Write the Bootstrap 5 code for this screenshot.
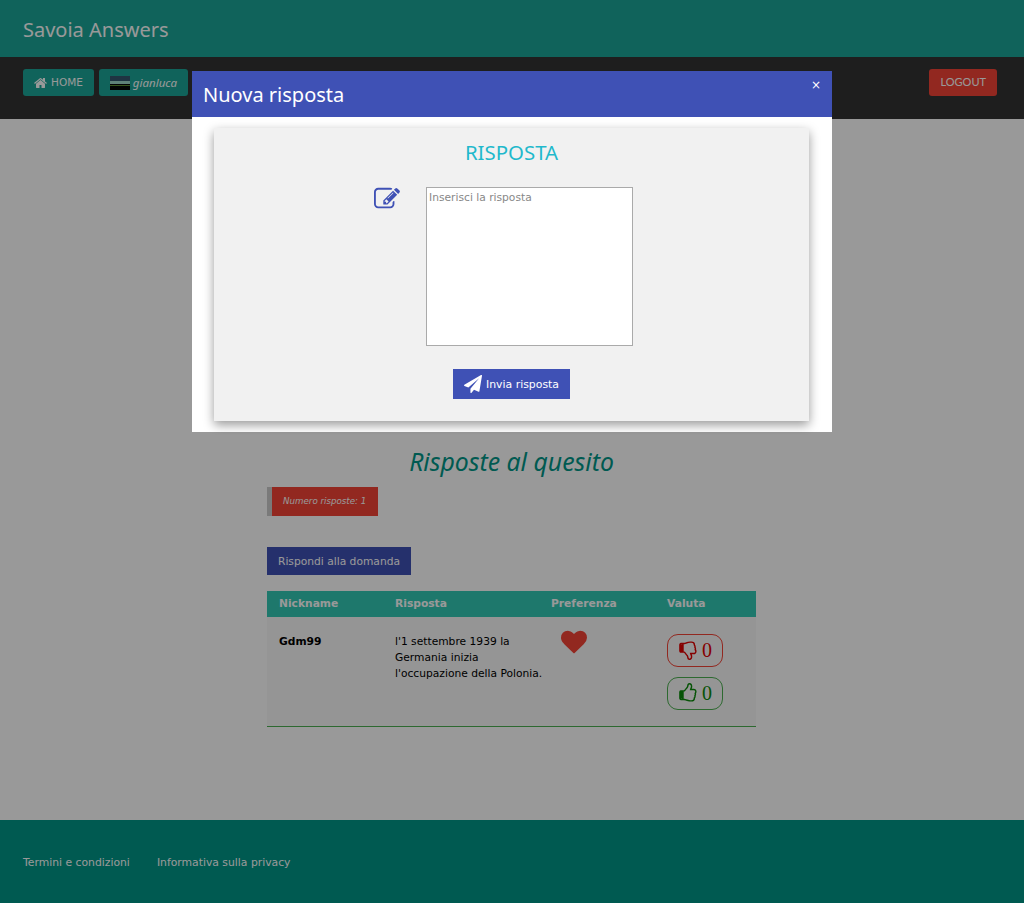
<!DOCTYPE html>
<html lang="it">
<head>
<meta charset="UTF-8">
<title>Savoia Answers</title>
<link href="https://cdn.jsdelivr.net/npm/bootstrap@5.3.0/dist/css/bootstrap.min.css" rel="stylesheet">
<style>
    body { font-family: "DejaVu Sans", sans-serif; font-size: 10.7px; color: #000; background: #fff; }
    .page-wrap { height: 903px; }
    .top-head { height: 57px; background: #1ba698; padding: 2px 0 0 23px; color: #fff; font-family: "Noto Sans", sans-serif; font-size: 20px; }
    .top-nav { height: 62px; background: #333; padding: 12px 27px 0 23px; gap: 5px; }
    .nav-btn { height: 27px; padding: 0 11px; background: #1ba698; color: #fff; border-radius: 3px; font-size: 10.5px; gap: 3px; }
    .nav-btn svg { width: 14px; height: 14px; fill: #fff; }
    .nav-user { font-style: italic; font-family: "Noto Sans", sans-serif; font-size: 11.5px; }
    .nav-out { background: #f44336; font-family: Lato, sans-serif; font-size: 11px; margin-left: auto; }
    .main-area { flex: 1; padding-top: 325px; }
    .main-col { width: 489px; margin-left: 267px; }
    .answers-title { font-family: "Noto Sans", sans-serif; font-style: italic; font-size: 24.8px; color: #009688; text-align: center; line-height: 34px; margin: 0; font-weight: 400; }
    .count-box { width: 111px; height: 29px; margin-top: 9px; background: #f44336; border-left: 5px solid #ccc; color: #fff; font-style: italic; font-size: 8.7px; padding-left: 11px; }
    .reply-btn { display: block; height: 28px; width: 144px; margin-top: 31px; padding: 1px 0 0; background: #3f51b5; color: #fff; border: 0; font-size: 10.7px; line-height: 27px; border-radius: 0; }
    .answers-table { width: 489px; table-layout: fixed; margin-top: 16px; border-collapse: collapse; }
    .answers-table th { height: 26px; background: #33c9b5; color: #fff; padding: 0 0 0 12px; font-size: 10.7px; }
    .answers-table td { vertical-align: top; padding: 17px 0 0 12px; height: 109px; background: #f9f9f9; border-bottom: 1px solid #4caf50; line-height: 16px; white-space: nowrap; }
    .heart-icon { width: 26px; height: 26px; fill: #f44336; display: block; margin: -5px 0 0 10px; }
    .vote-btn { width: 56px; height: 33px; border-radius: 11px; font-family: "Liberation Serif", serif; font-size: 20px; gap: 4px; background: transparent; margin-bottom: 10px; padding-bottom: 1px; }
    .vote-btn svg { width: 20px; height: 20px; }
    .vote-no { border: 1px solid #f44336; color: #e00000; }
    .vote-no svg { fill: #e00000; }
    .vote-yes { border: 1px solid #4caf50; color: #0a8a0a; }
    .vote-yes svg { fill: #0a8a0a; }
    .site-foot { height: 83px; background: #009688; color: #fff; padding: 3px 0 0 23px; gap: 27px; font-size: 10.8px; }
    .dim-layer { position: fixed; inset: 0; background: rgba(0,0,0,.4); padding-top: 71px; z-index: 10; }
    .dialog-box { width: 640px; height: 361px; margin: 0 auto; background: #fff; position: relative; }
    .dialog-head { height: 46px; background: #3f51b5; color: #fff; font-family: "Noto Sans", sans-serif; font-size: 20px; padding: 2px 0 0 11px; }
    .dialog-x { position: absolute; top: 6px; right: 11px; color: #fff; font-size: 12px; line-height: 16px; }
    .form-panel { width: 595px; height: 293px; margin: 11px 0 0 22px; background: #f1f1f1; box-shadow: 0 4px 10px rgba(0,0,0,.4); padding-top: 10px; }
    .form-title { font-family: "Noto Sans", sans-serif; font-size: 20.4px; font-weight: 400; color: #1fb9cc; text-align: center; line-height: 28px; margin: 0 0 21px; }
    .form-row { padding-left: 160px; gap: 26px; }
    .form-row svg { width: 26px; height: 26px; fill: #3f51b5; margin-top: -1px; }
    .answer-input { width: 207px; height: 159px; border: 1px solid #aaa; padding: 2px; font-size: 10.7px; resize: none; display: block; background: #fff; }
    .answer-input::placeholder { color: #888; }
    .send-btn { display: flex; width: 117px; height: 30px; margin: 23px 0 0 239px; padding: 3px 0 0; background: #3f51b5; color: #fff; border: 0; border-radius: 0; font-size: 10.9px; gap: 4px; }
    .send-btn svg { width: 18px; height: 18px; fill: #fff; margin-top: -3px; }
</style>
</head>
<body>
<div class="page-wrap d-flex flex-column">
    <div class="top-head d-flex align-items-center">Savoia Answers</div>
    <div class="top-nav d-flex align-items-start">
        <div class="nav-btn d-flex align-items-center">
            <svg viewBox="0 0 1792 1792"><path d="M1408 992v480q0 26-19 45t-45 19h-384v-384h-256v384h-384q-26 0-45-19t-19-45v-480q0-1 .5-3t.5-3l575-474 575 474q1 2 1 6zm223-69l-62 74q-8 9-21 11h-3q-13 0-21-7l-692-577-692 577q-12 8-24 7-13-2-21-11l-62-74q-8-10-7-23.500t11-21.500l719-599q32-26 76-26t76 26l244 204v-195q0-14 9-23t23-9h192q14 0 23 9t9 23v408l219 182q10 8 11 21.500t-7 23.500z"/></svg>
            HOME
        </div>
        <div class="nav-btn d-flex align-items-center">
            <svg viewBox="0 0 20 14" style="width:20px">
                <rect width="20" height="5" fill="#34586f"/><rect y="5" width="20" height="3" fill="#9fd8c8"/><rect y="8" width="20" height="6" fill="#050805"/><rect y="9" width="20" height="1" fill="#5a8a30"/>
            </svg>
            <span class="nav-user">gianluca</span>
        </div>
        <div class="nav-btn nav-out d-flex align-items-center">LOGOUT</div>
    </div>

    <div class="main-area">
        <div class="main-col">
            <h2 class="answers-title">Risposte al quesito</h2>
            <div class="count-box d-flex align-items-center">Numero risposte: 1</div>
            <button class="reply-btn btn">Rispondi alla domanda</button>
            <table class="answers-table">
                <colgroup><col style="width:116px"><col style="width:156px"><col style="width:116px"><col></colgroup>
                <thead>
                    <tr><th>Nickname</th><th>Risposta</th><th>Preferenza</th><th>Valuta</th></tr>
                </thead>
                <tbody>
                    <tr>
                        <td><b>Gdm99</b></td>
                        <td>l'1 settembre 1939 la<br>Germania inizia<br>l'occupazione della Polonia.</td>
                        <td><svg class="heart-icon" viewBox="0 0 1792 1792"><path d="M896 1664q-26 0-44-18l-624-602q-10-8-27.500-26t-55.500-65.500-68-97.500-53.500-121-23.500-138q0-220 127-344t351-124q62 0 126.500 21.500t120 58 95.500 68.500 76 68q36-36 76-68t95.500-68.500 120-58 126.500-21.500q224 0 351 124t127 344q0 221-229 450l-623 600q-18 18-44 18z"/></svg></td>
                        <td>
                            <div class="vote-btn vote-no d-flex align-items-center justify-content-center">
                                <svg viewBox="0 0 1792 1792" transform="scale(1,-1)"><rect x="128" y="768" width="320" height="640"/><path d="M384 1344q0-26-19-45t-45-19-45 19-19 45 19 45 45 19 45-19 19-45zm1152-576q0-51-39-89.500t-89-38.500h-352q0-58 48-159.500t48-160.500q0-98-32-145t-128-47q-26 26-38 85t-30.500 125.500-59.500 109.500q-22 23-77 91-4 5-23 30t-31.500 41-34.500 42.500-40 44-38.500 35.500-40 27-35.500 9h-32v640h32q13 0 31.500 3t33 6.500 38 11 35 11.500 35.500 12.500 29 10.500q211 73 342 73h121q192 0 192-167 0-26-5-56 30-16 47.500-52.500t17.500-73.500-18-69q53-50 53-119 0-25-10-55.500t-25-47.500q32-1 53.500-47t21.500-81zm128-1q0 89-49 163 9 33 9 69 0 77-38 144 3 21 3 43 0 101-60 178 1 139-85 219.500t-227 80.500h-129q-96 0-189.500-22.500t-216.500-65.500q-116-40-138-40h-288q-53 0-90.500-37.500t-37.500-90.500v-640q0-53 37.500-90.500t90.500-37.500h274q36-24 137-155 58-75 107-128 24-25 35.500-85.500t30.500-126.500 62-108q39-37 90-37 84 0 151 32.500t102 101.500 35 186q0 93-48 192h176q104 0 180 76t76 179z"/></svg>
                                0
                            </div>
                            <div class="vote-btn vote-yes d-flex align-items-center justify-content-center">
                                <svg viewBox="0 0 1792 1792"><rect x="128" y="768" width="320" height="640"/><path d="M384 1344q0-26-19-45t-45-19-45 19-19 45 19 45 45 19 45-19 19-45zm1152-576q0-51-39-89.500t-89-38.500h-352q0-58 48-159.500t48-160.500q0-98-32-145t-128-47q-26 26-38 85t-30.500 125.500-59.500 109.500q-22 23-77 91-4 5-23 30t-31.500 41-34.500 42.500-40 44-38.500 35.500-40 27-35.500 9h-32v640h32q13 0 31.500 3t33 6.500 38 11 35 11.500 35.500 12.500 29 10.500q211 73 342 73h121q192 0 192-167 0-26-5-56 30-16 47.500-52.500t17.500-73.500-18-69q53-50 53-119 0-25-10-55.500t-25-47.500q32-1 53.500-47t21.500-81zm128-1q0 89-49 163 9 33 9 69 0 77-38 144 3 21 3 43 0 101-60 178 1 139-85 219.500t-227 80.500h-129q-96 0-189.500-22.500t-216.500-65.500q-116-40-138-40h-288q-53 0-90.500-37.500t-37.500-90.500v-640q0-53 37.500-90.500t90.500-37.500h274q36-24 137-155 58-75 107-128 24-25 35.500-85.500t30.500-126.500 62-108q39-37 90-37 84 0 151 32.500t102 101.500 35 186q0 93-48 192h176q104 0 180 76t76 179z"/></svg>
                                0
                            </div>
                        </td>
                    </tr>
                </tbody>
            </table>
        </div>
    </div>

    <div class="site-foot d-flex align-items-center">
        <span>Termini e condizioni</span>
        <span>Informativa sulla privacy</span>
    </div>
</div>

<div class="dim-layer">
    <div class="dialog-box">
        <div class="dialog-head d-flex align-items-center">Nuova risposta</div>
        <span class="dialog-x">×</span>
        <div class="form-panel">
            <h3 class="form-title">RISPOSTA</h3>
            <div class="form-row d-flex align-items-start">
                <svg viewBox="0 0 1792 1792"><path d="M888 1184l116-116-152-152-116 116v56h96v96h56zm440-720q-16-16-33 1l-350 350q-17 17-1 33t33-1l350-350q17-17 1-33zm80 594v190q0 119-84.500 203.500t-203.500 84.500h-832q-119 0-203.500-84.500t-84.500-203.500v-832q0-119 84.500-203.500t203.500-84.500h832q63 0 117 25 15 7 18 23 3 17-9 29l-49 49q-14 14-32 8-23-6-45-6h-832q-66 0-113 47t-47 113v832q0 66 47 113t113 47h832q66 0 113-47t47-113v-126q0-13 9-22l64-64q15-15 35-7t20 29zm-96-738l288 288-672 672h-288v-288zm444 132l-92 92-288-288 92-92q28-28 68-28t68 28l152 152q28 28 28 68t-28 68z"/></svg>
                <textarea class="answer-input" placeholder="Inserisci la risposta"></textarea>
            </div>
            <button class="send-btn btn align-items-center justify-content-center">
                <svg viewBox="0 0 1792 1792"><path d="M1764 11q33 24 27 64l-256 1536q-5 29-32 45-14 8-31 8-11 0-24-5l-453-185-242 295q-18 23-49 23-13 0-22-4-19-7-30.500-23.500t-11.500-36.500v-349l864-1059-1069 925-395-162q-37-14-40-55-2-40 32-59l1664-960q15-9 32-9 20 0 36 11z"/></svg>
                Invia risposta
            </button>
        </div>
    </div>
</div>
<script src="https://cdn.jsdelivr.net/npm/bootstrap@5.3.0/dist/js/bootstrap.bundle.min.js"></script>
</body>
</html>
